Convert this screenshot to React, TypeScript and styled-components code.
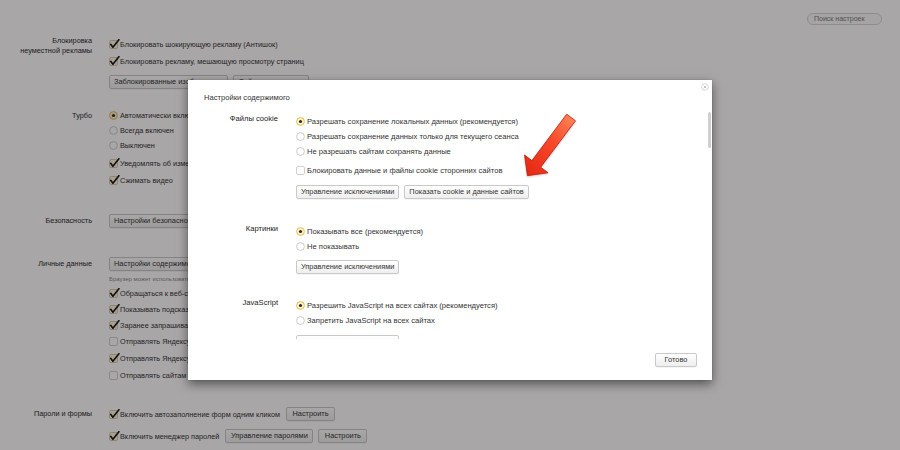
import React from "react";
import styled, { createGlobalStyle } from "styled-components";

const GlobalStyle = createGlobalStyle`
  html, body {
    margin: 0;
    padding: 0;
  }
  body {
    width: 900px;
    height: 450px;
    overflow: hidden;
    background: #ffffff;
    font-family: "Liberation Sans", Arial, sans-serif;
    font-size: 7.6px;
    color: #333333;
  }
`;

const Page = styled.div`
  position: relative;
  width: 900px;
  height: 450px;
  overflow: hidden;
  background: #ffffff;
`;

const Settings = styled.div`
  font-size: 7.3px;
`;

const TopBar = styled.div`
  display: flex;
  justify-content: flex-end;
  padding: 13px 18px 0 0;
`;

const Search = styled.div`
  box-sizing: border-box;
  width: 75px;
  height: 12px;
  padding-left: 6px;
  border: 1px solid #d6d6d6;
  border-radius: 6px;
  background: #fbfbfb;
  font-size: 7px;
  line-height: 10px;
  color: #7a7a7a;
`;

const Section = styled.section<{ $top: number }>`
  display: grid;
  grid-template-columns: 92px 1fr;
  column-gap: 17px;
  margin-top: ${(p) => p.$top}px;
`;

const SectionLabel = styled.div<{ $offset: number }>`
  text-align: right;
  line-height: 10px;
  padding-top: ${(p) => p.$offset}px;
  color: #2a2a2a;
`;

const Controls = styled.div`
  display: flex;
  flex-direction: column;
  align-items: flex-start;
`;

const Row = styled.div<{ $h: number; $mt?: number }>`
  display: flex;
  align-items: center;
  gap: 6px;
  height: ${(p) => p.$h}px;
  margin-top: ${(p) => p.$mt ?? 0}px;
`;

const Option = styled.div<{ $gap?: number }>`
  display: flex;
  align-items: center;
  gap: ${(p) => p.$gap ?? 0}px;
  white-space: nowrap;
  color: #333333;
  svg {
    flex: none;
  }
`;

const Hint = styled.div`
  height: 12px;
  line-height: 12px;
  margin-top: 2px;
  font-size: 6px;
  color: #8a8a8a;
  white-space: nowrap;
`;

const Button = styled.button<{ $minWidth?: number }>`
  box-sizing: border-box;
  height: 14px;
  min-width: ${(p) => p.$minWidth ?? 0}px;
  padding: 0 4px;
  font-family: inherit;
  font-size: 7.4px;
  line-height: 12px;
  color: #333333;
  white-space: nowrap;
  border: 1px solid #c9c9c9;
  border-radius: 2px;
  background: linear-gradient(#ffffff, #eeeeee);
  box-shadow: 0 1px 0 rgba(0, 0, 0, 0.04);
`;

const ButtonRow = styled.div<{ $mt: number }>`
  display: flex;
  gap: 5px;
  margin-top: ${(p) => p.$mt}px;
`;

const Dim = styled.div`
  position: absolute;
  inset: 0;
  background: rgba(13, 8, 10, 0.36);
`;

const Modal = styled.div`
  position: absolute;
  top: 80px;
  left: 188px;
  width: 524px;
  height: 300px;
  display: flex;
  flex-direction: column;
  background: #ffffff;
  box-shadow: 0 4px 10px rgba(0, 0, 0, 0.5), 0 0 1px rgba(0, 0, 0, 0.3);
`;

const CloseButton = styled.div`
  position: absolute;
  top: 3px;
  right: 3px;
  width: 8px;
  height: 8px;
`;

const ModalTitle = styled.div`
  padding: 13px 16px 0;
  line-height: 10px;
  color: #333333;
`;

const ScrollArea = styled.div`
  position: relative;
  height: 231px;
  margin-top: 5px;
  overflow: hidden;
`;

const ScrollThumb = styled.div`
  position: absolute;
  top: 4px;
  right: 1px;
  width: 3px;
  height: 36px;
  border-radius: 2px;
  background: #cfcfcf;
`;

const ModalSection = styled.div<{ $top: number }>`
  display: grid;
  grid-template-columns: 90px 1fr;
  column-gap: 18px;
  margin-top: ${(p) => p.$top}px;
`;

const ModalLabel = styled.div`
  text-align: right;
  line-height: 10px;
  color: #222222;
`;

const Footer = styled.div`
  display: flex;
  justify-content: flex-end;
  padding: 14px 15px 13px 0;
`;

const Arrow = styled.svg`
  position: absolute;
  left: 515px;
  top: 105px;
  width: 70px;
  height: 80px;
  filter: drop-shadow(0 1px 1px rgba(0, 0, 0, 0.2));
`;

const CheckIcon = ({ checked }: { checked: boolean }) => (
  <svg width="11" height="11" viewBox="0 0 11 11">
    <rect
      x="0.5"
      y="1.5"
      width="8"
      height="8"
      rx="1.5"
      fill={checked ? "#fff7e0" : "#ffffff"}
      stroke={checked ? "#d3c291" : "#c4c4c4"}
      strokeWidth="0.8"
    />
    {checked && (
      <path
        d="M1.7 5.3 L3.9 8.3 L9.9 0.7"
        fill="none"
        stroke="#141414"
        strokeWidth="1.6"
        strokeLinecap="round"
        strokeLinejoin="round"
      />
    )}
  </svg>
);

const RadioIcon = ({ checked }: { checked: boolean }) => (
  <svg width="9" height="9" viewBox="0 0 9 9">
    <circle
      cx="4.5"
      cy="4.5"
      r="3.9"
      fill={checked ? "#fff3cc" : "#ffffff"}
      stroke={checked ? "#e0b54a" : "#c6c6c6"}
      strokeWidth="0.9"
    />
    {checked && <circle cx="4.5" cy="4.5" r="1.6" fill="#2a2a2a" />}
  </svg>
);

type OptionProps = { text: string; checked?: boolean };

const Check = ({ text, checked = false }: OptionProps) => (
  <Option>
    <CheckIcon checked={checked} />
    {text}
  </Option>
);

const Radio = ({ text, checked = false }: OptionProps) => (
  <Option $gap={2}>
    <RadioIcon checked={checked} />
    {text}
  </Option>
);

function SettingsPage() {
  return (
    <Settings>
      <TopBar>
        <Search>Поиск настроек</Search>
      </TopBar>

      <Section $top={11}>
        <SectionLabel $offset={0}>
          Блокировка
          <br />
          неуместной рекламы
        </SectionLabel>
        <Controls>
          <Row $h={17}>
            <Check checked text="Блокировать шокирующую рекламу (Антишок)" />
          </Row>
          <Row $h={17}>
            <Check checked text="Блокировать рекламу, мешающую просмотру страниц" />
          </Row>
          <ButtonRow $mt={5}>
            <Button>Заблокированные изображения</Button>
            <Button>Сайты-исключения</Button>
          </ButtonRow>
        </Controls>
      </Section>

      <Section $top={19}>
        <SectionLabel $offset={3}>Турбо</SectionLabel>
        <Controls>
          <Row $h={15}>
            <Radio checked text="Автоматически включать при медленном соединении" />
          </Row>
          <Row $h={15}>
            <Radio text="Всегда включен" />
          </Row>
          <Row $h={15}>
            <Radio text="Выключен" />
          </Row>
          <Row $h={17} $mt={2}>
            <Check checked text="Уведомлять об изменении скорости соединения" />
          </Row>
          <Row $h={17}>
            <Check checked text="Сжимать видео" />
          </Row>
        </Controls>
      </Section>

      <Section $top={25}>
        <SectionLabel $offset={2}>Безопасность</SectionLabel>
        <Controls>
          <Button>Настройки безопасности</Button>
        </Controls>
      </Section>

      <Section $top={29}>
        <SectionLabel $offset={2}>Личные данные</SectionLabel>
        <Controls>
          <Button>Настройки содержимого</Button>
          <Hint>Браузер может использовать веб-службы для улучшения работы.</Hint>
          <Row $h={16}>
            <Check checked text="Обращаться к веб-сервису для разрешения проблем с навигацией" />
          </Row>
          <Row $h={16}>
            <Check checked text="Показывать подсказки при наборе адреса" />
          </Row>
          <Row $h={16}>
            <Check checked text="Заранее запрашивать данные о страницах" />
          </Row>
          <Row $h={17}>
            <Check text="Отправлять Яндексу статистику использования" />
          </Row>
          <Row $h={17}>
            <Check checked text="Отправлять Яндексу отчёты о сбоях" />
          </Row>
          <Row $h={16}>
            <Check text="Отправлять сайтам запрос «Не отслеживать»" />
          </Row>
        </Controls>
      </Section>

      <Section $top={23}>
        <SectionLabel $offset={3}>Пароли и формы</SectionLabel>
        <Controls>
          <Row $h={16}>
            <Check checked text="Включить автозаполнение форм одним кликом" />
            <Button $minWidth={49}>Настроить</Button>
          </Row>
          <Row $h={16} $mt={6}>
            <Check checked text="Включить менеджер паролей" />
            <ButtonRow $mt={0}>
              <Button $minWidth={88}>Управление паролями</Button>
              <Button $minWidth={49}>Настроить</Button>
            </ButtonRow>
          </Row>
        </Controls>
      </Section>
    </Settings>
  );
}

function ContentSettingsModal() {
  return (
    <Modal>
      <CloseButton>
        <svg width="8" height="8" viewBox="0 0 8 8">
          <circle cx="4" cy="4" r="3.4" fill="#ffffff" stroke="#cfcfcf" strokeWidth="0.8" />
          <path d="M2.7 2.7 L5.3 5.3 M5.3 2.7 L2.7 5.3" stroke="#b5b5b5" strokeWidth="0.8" />
        </svg>
      </CloseButton>
      <ModalTitle>Настройки содержимого</ModalTitle>

      <ScrollArea>
        <ModalSection $top={6}>
          <ModalLabel>Файлы cookie</ModalLabel>
          <Controls>
            <Row $h={15}>
              <Radio checked text="Разрешать сохранение локальных данных (рекомендуется)" />
            </Row>
            <Row $h={15}>
              <Radio text="Разрешать сохранение данных только для текущего сеанса" />
            </Row>
            <Row $h={15}>
              <Radio text="Не разрешать сайтам сохранять данные" />
            </Row>
            <Row $h={15} $mt={4}>
              <Check text="Блокировать данные и файлы cookie сторонних сайтов" />
            </Row>
            <ButtonRow $mt={7}>
              <Button>Управление исключениями</Button>
              <Button>Показать cookie и данные сайтов</Button>
            </ButtonRow>
          </Controls>
        </ModalSection>

        <ModalSection $top={25}>
          <ModalLabel>Картинки</ModalLabel>
          <Controls>
            <Row $h={15}>
              <Radio checked text="Показывать все (рекомендуется)" />
            </Row>
            <Row $h={15}>
              <Radio text="Не показывать" />
            </Row>
            <ButtonRow $mt={6}>
              <Button>Управление исключениями</Button>
            </ButtonRow>
          </Controls>
        </ModalSection>

        <ModalSection $top={24}>
          <ModalLabel>JavaScript</ModalLabel>
          <Controls>
            <Row $h={15}>
              <Radio checked text="Разрешить JavaScript на всех сайтах (рекомендуется)" />
            </Row>
            <Row $h={15}>
              <Radio text="Запретить JavaScript на всех сайтах" />
            </Row>
            <ButtonRow $mt={7}>
              <Button>Управление исключениями</Button>
            </ButtonRow>
          </Controls>
        </ModalSection>

        <ScrollThumb />
      </ScrollArea>

      <Footer>
        <Button $minWidth={42}>Готово</Button>
      </Footer>
    </Modal>
  );
}

export default function App() {
  return (
    <Page>
      <GlobalStyle />
      <SettingsPage />
      <Dim />
      <ContentSettingsModal />
      <Arrow viewBox="0 0 70 80">
        <defs>
          <linearGradient id="arrowFill" x1="1" y1="0" x2="0" y2="1">
            <stop offset="0" stopColor="#ff8a5c" />
            <stop offset="0.45" stopColor="#f8482a" />
            <stop offset="1" stopColor="#e42612" />
          </linearGradient>
        </defs>
        <polygon
          points="12.4,70.7 33.1,67.8 25.7,62.2 60.5,15.8 51.7,9.2 16.9,55.6 9.5,50"
          fill="url(#arrowFill)"
          stroke="#b81e0c"
          strokeWidth="0.8"
          strokeLinejoin="round"
        />
      </Arrow>
    </Page>
  );
}
